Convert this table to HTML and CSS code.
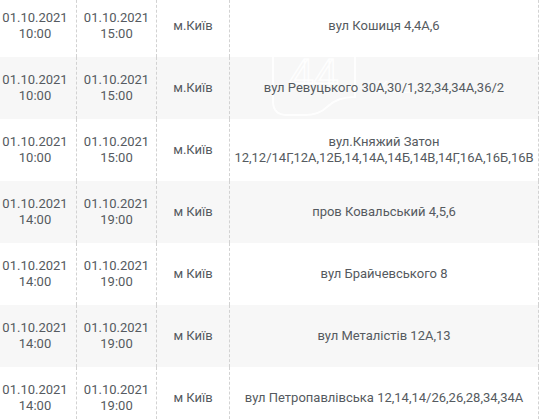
FILE: index.html
```html
<!DOCTYPE html>
<html lang="uk">
<head>
<meta charset="utf-8">
<link rel="stylesheet" href="styles.css">
</head>
<body>
<table class="outages">
  <tbody>
    <tr>
      <td class="c1">01.10.2021<br>10:00</td>
      <td class="c2">01.10.2021<br>15:00</td>
      <td class="c3">м.Київ</td>
      <td class="c4">вул Кошиця 4,4А,6</td>
    </tr>
    <tr class="alt">
      <td class="c1">01.10.2021<br>10:00</td>
      <td class="c2">01.10.2021<br>15:00</td>
      <td class="c3">м.Київ</td>
      <td class="c4 mark-cell">
        <svg class="watermark" width="180" height="62" viewBox="0 0 180 62">
          <path d="M18 -4 V44 Q18 58 32 58 H50 Q64 58 72 50 Q82 40 100 40 V-4" fill="none" stroke="#ffffff" stroke-width="2"/>
          <text x="34" y="34" font-family="Roboto, sans-serif" font-size="44" fill="none" stroke="#ffffff" stroke-width="1.5">44</text>
          <text x="122" y="36" font-family="Roboto, sans-serif" font-size="17" fill="#ffffff">Київ</text>
        </svg>
        <span class="txt">вул Ревуцького 30А,30/1,32,34,34А,36/2</span>
      </td>
    </tr>
    <tr>
      <td class="c1">01.10.2021<br>10:00</td>
      <td class="c2">01.10.2021<br>15:00</td>
      <td class="c3">м.Київ</td>
      <td class="c4">вул.Княжий Затон<br>12,12/14Г,12А,12Б,14,14А,14Б,14В,14Г,16А,16Б,16В</td>
    </tr>
    <tr class="alt">
      <td class="c1">01.10.2021<br>14:00</td>
      <td class="c2">01.10.2021<br>19:00</td>
      <td class="c3">м Київ</td>
      <td class="c4">пров Ковальський 4,5,6</td>
    </tr>
    <tr>
      <td class="c1">01.10.2021<br>14:00</td>
      <td class="c2">01.10.2021<br>19:00</td>
      <td class="c3">м Київ</td>
      <td class="c4">вул Брайчевського 8</td>
    </tr>
    <tr class="alt">
      <td class="c1">01.10.2021<br>14:00</td>
      <td class="c2">01.10.2021<br>19:00</td>
      <td class="c3">м Київ</td>
      <td class="c4">вул Металістів 12А,13</td>
    </tr>
    <tr>
      <td class="c1">01.10.2021<br>14:00</td>
      <td class="c2">01.10.2021<br>19:00</td>
      <td class="c3">м Київ</td>
      <td class="c4">вул Петропавлівська 12,14,14/26,26,28,34,34А</td>
    </tr>
  </tbody>
</table>
</body>
</html>
```

FILE: styles.css
```css
html, body {
  margin: 0;
  padding: 0;
  background: #ffffff;
  overflow: hidden;
}

.outages {
  margin-top: -5px;
  width: 539px;
  table-layout: fixed;
  border-collapse: separate;
  border-spacing: 0;
  font-family: Roboto, "Noto Sans", sans-serif;
  font-size: 13px;
  line-height: 16px;
  color: #555a60;
}

.outages td {
  box-sizing: border-box;
  padding: 15px 5px;
  text-align: center;
  vertical-align: middle;
  border-right: 1px dashed #d2d2d2;
}

.outages .c1 { width: 77px; padding-right: 8px; padding-left: 2px; }
.outages .c2 { width: 80px; }
.outages .c3 { width: 73px; }
.outages .c4 { width: 309px; padding-left: 3px; padding-right: 3px; }

.outages tr.alt td {
  background: #f7f7f7;
}

.mark-cell {
  position: relative;
}

.watermark {
  position: absolute;
  left: 25px;
  top: 0;
  opacity: 0.9;
}

.mark-cell .txt {
  position: relative;
}
```
